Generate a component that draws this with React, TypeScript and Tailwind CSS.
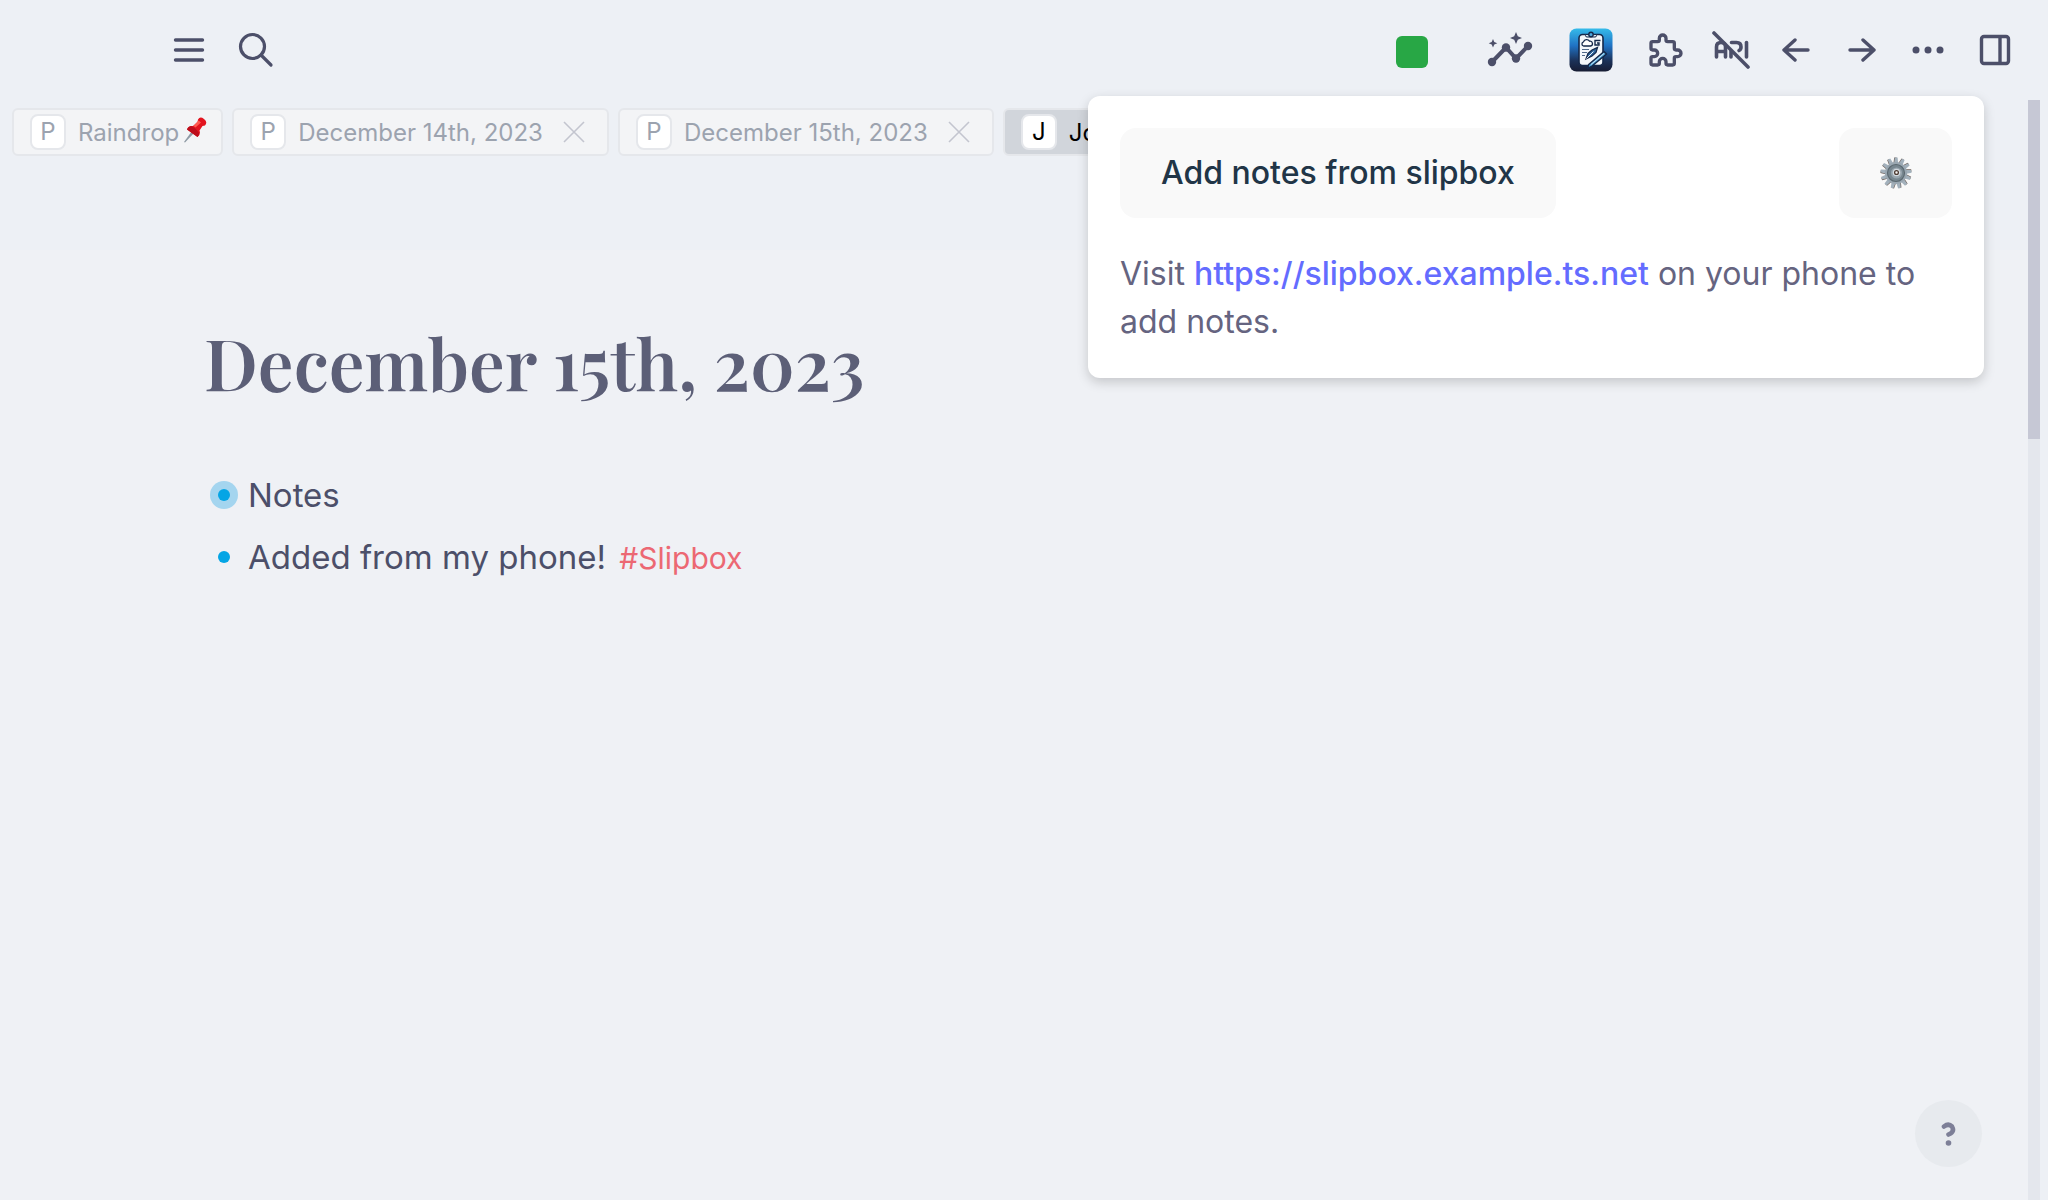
import React from "react";

const INK = "#4c4f69";

function IconButton({ label, className, children }: { label: string; className?: string; children: React.ReactNode }) {
  return (
    <button type="button" aria-label={label} className={`flex h-11 items-center justify-center ${className ?? ""}`}>
      {children}
    </button>
  );
}

function MenuIcon() {
  return (
    <svg width="32" height="26" viewBox="0 0 32 26" fill="none" stroke={INK} strokeWidth="3.4" strokeLinecap="round">
      <path d="M2.500 3h27M2.500 13h27M2.500 23h27" />
    </svg>
  );
}

function SearchIcon() {
  return (
    <svg width="36" height="36" viewBox="0 0 36 36" fill="none" stroke={INK} strokeWidth="3.2">
      <circle cx="14.500" cy="14.500" r="12" />
      <path d="M23 23l10 10" strokeLinecap="round" />
    </svg>
  );
}

function InsightsIcon() {
  return (
    <svg width="46" height="36" viewBox="0 0 46 36" fill={INK}>
      <path d="M5 30L19 15.500L29 26.500L41 14" fill="none" stroke={INK} strokeWidth="4" />
      <circle cx="5" cy="30" r="4.200" />
      <circle cx="19" cy="15.500" r="4.200" />
      <circle cx="29" cy="26.500" r="4.200" />
      <circle cx="41" cy="14" r="4.200" />
      <path d="M29 0l1.800 4.200 4.200 1.800-4.200 1.800-1.800 4.200-1.800-4.200-4.200-1.800 4.200-1.800z" />
      <path d="M6 7l1.300 3 3 1.300-3 1.300-1.300 3-1.300-3-3-1.300 3-1.300z" />
    </svg>
  );
}

function SlipboxLogo() {
  return (
    <svg width="44" height="44" viewBox="0 0 44 44">
      <defs>
        <linearGradient id="slipbox-bg" x1="0" y1="0" x2="0" y2="1">
          <stop offset="0" stopColor="#35bbea" />
          <stop offset="0.4" stopColor="#2072c4" />
          <stop offset="0.75" stopColor="#1b3158" />
          <stop offset="1" stopColor="#171c33" />
        </linearGradient>
      </defs>
      <rect x="0.500" y="0.500" width="43" height="43" rx="7" fill="url(#slipbox-bg)" />
      <rect x="10" y="6.500" width="24" height="31" rx="3.500" fill="#f3f7fb" stroke="#14284a" strokeWidth="1.600" />
      <path d="M16.500 6.500h11v1q0 1.500-1.500 1.500h-8q-1.500 0-1.500-1.500z" fill="#dce8f2" stroke="#14284a" strokeWidth="1" />
      <circle cx="22" cy="6.500" r="2.200" fill="#4ba9df" stroke="#14284a" strokeWidth="1.400" />
      <path d="M14.500 18a2.200 2.200 0 010-4.200 3.400 3.400 0 016-.6 2.400 2.400 0 011 4.800z" fill="#fff" stroke="#14284a" strokeWidth="1.300" />
      <path d="M31.500 12.500h-5.500v4.500h4v-2h-2" fill="none" stroke="#14284a" strokeWidth="1.400" />
      <path d="M13 21.500h7M13 24.500h5M13 27.500h3" stroke="#50698a" strokeWidth="1.200" />
      <path d="M17 31l2-5.500 4-3.500 5.500-2.500-1.500 5-4 3.500z" fill="#2c669d" stroke="#14284a" strokeWidth="1.300" />
      <path d="M17.500 30.500l7-7" stroke="#fff" strokeWidth="0.900" />
      <path d="M18.500 40.500l1.200-4L35 23.500l2.500 2.500-15 12.500z" fill="#4fa3d8" stroke="#14284a" strokeWidth="1.500" strokeLinejoin="round" />
      <path d="M22 36.500l13-11" stroke="#d5edf9" strokeWidth="0.900" />
    </svg>
  );
}

function PuzzleIcon() {
  return (
    <svg width="40" height="40" viewBox="0 0 24 24" fill="none" stroke={INK} strokeWidth="2" strokeLinecap="round" strokeLinejoin="round">
      <path d="M4 7h3a1 1 0 0 0 1 -1v-1a2 2 0 0 1 4 0v1a1 1 0 0 0 1 1h3a1 1 0 0 1 1 1v3a1 1 0 0 0 1 1h1a2 2 0 0 1 0 4h-1a1 1 0 0 0 -1 1v3a1 1 0 0 1 -1 1h-3a1 1 0 0 1 -1 -1v-1a2 2 0 0 0 -4 0v1a1 1 0 0 1 -1 1h-3a1 1 0 0 1 -1 -1v-3a1 1 0 0 1 1 -1h1a2 2 0 0 0 0 -4h-1a1 1 0 0 1 -1 -1v-3a1 1 0 0 1 1 -1" />
    </svg>
  );
}

function ApiOffIcon() {
  return (
    <svg width="40" height="40" viewBox="0 0 40 40" fill="none" stroke={INK} strokeWidth="3.600" strokeLinecap="round" strokeLinejoin="round">
      <path d="M4.500 27V17q0-4.500 4.500-4.500q4.500 0 4.500 4.500V27M4.500 21.500h9" />
      <path d="M19 21V27M19.500 12.500h5q4.500 0 4.500 4.500q0 2.500-2 3.500" />
      <path d="M34.500 12.500V27" />
      <path d="M2 3L36 37" />
    </svg>
  );
}

function ArrowIcon({ d }: { d: string }) {
  return (
    <svg width="28" height="26" viewBox="0 0 28 26" fill="none" stroke={INK} strokeWidth="3.400" strokeLinecap="round" strokeLinejoin="round">
      <path d={d} />
    </svg>
  );
}

function DotsIcon() {
  return (
    <svg width="32" height="8" viewBox="0 0 32 8" fill={INK}>
      <circle cx="4" cy="4" r="3.500" />
      <circle cx="16" cy="4" r="3.500" />
      <circle cx="28" cy="4" r="3.500" />
    </svg>
  );
}

function SidebarIcon() {
  return (
    <svg width="32" height="32" viewBox="0 0 32 32" fill="none" stroke={INK} strokeWidth="3.400">
      <rect x="2.500" y="2.500" width="27" height="27" rx="2.500" />
      <path d="M21 3v26" />
    </svg>
  );
}

function PinIcon() {
  return (
    <svg width="24" height="26" viewBox="0 0 24 26" className="shrink-0">
      <path d="M9 14L1 25l1 .5L11 16z" fill="#8e9aa5" />
      <path d="M15 2.500q2-3.500 6-.5 4 3 1 6.500l-2.500.500-3 4.500q1.500 4-2 6.500L4 12.500q1.500-4 6-3.500l4.500-4z" fill="#e3141f" />
      <path d="M4 12.500q1-3.500 4.500-3.500 5 2.500 7.500 7 .5 2-1.500 4z" fill="#bd0d1b" />
      <path d="M15.500 3.500l-5 5.500 2 1.500 5.500-5z" fill="#ff5a50" />
    </svg>
  );
}

function GearIcon() {
  const teeth = Array.from({ length: 13 }, (_, i) => (i * 360) / 13);
  return (
    <svg width="32" height="32" viewBox="0 0 32 32">
      {teeth.map((a) => (
        <g key={a} transform={`rotate(${a} 16 16)`}>
          <path d="M13.400 7l.8-6.500h2.400l.4 6.500z" fill="#6d5f58" />
          <path d="M14 7l.8-6.500h2.800l.6 6.500z" fill="#a3b1bc" />
        </g>
      ))}
      <circle cx="16" cy="16" r="11" fill="#9aa7b1" />
      <circle cx="16" cy="16" r="8.500" fill="#77868f" stroke="#5c6971" strokeWidth="1.200" />
      <circle cx="16.500" cy="16" r="5.600" fill="#98a5ae" />
      <circle cx="16.500" cy="15.500" r="3.800" fill="#d3dae0" />
      <circle cx="16.500" cy="15.500" r="1.900" fill="#f7f5f3" stroke="#4d3b32" strokeWidth="1.300" />
    </svg>
  );
}

function QuestionIcon() {
  return (
    <svg width="16" height="24" viewBox="0 0 16 24" fill="none" stroke="#7d7f97" strokeLinecap="round" strokeLinejoin="round">
      <path d="M3 4.500Q7.500 1 11 4.500Q13.500 9 9.500 11.500L7.500 12.500" strokeWidth="4.600" />
      <circle cx="7.500" cy="21" r="2.800" fill="#7d7f97" stroke="none" />
    </svg>
  );
}

function Tab({ badge, title, active, pinned }: { badge: string; title: string; active?: boolean; pinned?: boolean }) {
  return (
    <div
      className={`flex h-12 shrink-0 items-center rounded-md border-2 border-[#e5e7eb] pl-4 text-2xl ${
        active ? "bg-[#d1d5db] text-black" : "bg-[#f3f4f6] text-[#9ca3af]"
      } ${pinned ? "pr-3.5" : "pr-[22px]"}`}
    >
      <span className="flex h-9 w-9 items-center justify-center rounded-lg border-2 border-[#e5e7eb] bg-white">{badge}</span>
      <button type="button" className="ml-3 pt-0.5 whitespace-nowrap">{title}</button>
      {pinned ? (
        <span className="mb-1 ml-1"><PinIcon /></span>
      ) : (
        <button type="button" aria-label={`Close ${title}`} className="ml-5">
          <svg width="22" height="22" viewBox="0 0 22 22" fill="none" stroke="#c3c5cf" strokeWidth="1.600">
            <path d="M1 1l20 20M21 1L1 21" />
          </svg>
        </button>
      )}
    </div>
  );
}

function Block({ focused, children }: { focused?: boolean; children: React.ReactNode }) {
  return (
    <li className="flex h-[62px] items-center gap-2.5">
      <span className={`flex h-7 w-7 items-center justify-center rounded-full ${focused ? "bg-[#a4d5ef]" : ""}`}>
        <span className="h-3 w-3 rounded-full bg-[#04a5e5]" />
      </span>
      <p className="text-[33px] leading-10">{children}</p>
    </li>
  );
}

function SlipboxPanel() {
  return (
    <section className="absolute top-24 right-16 w-[896px] rounded-xl bg-white p-8 shadow-[0_4px_12px_rgba(0,0,0,0.18)]">
      <div className="flex items-center justify-between">
        <button type="button" className="h-[90px] rounded-2xl bg-[#f9f9f9] px-[41px] text-[32px] font-medium text-[#213547]">
          Add notes from slipbox
        </button>
        <button type="button" aria-label="Settings" className="flex h-[90px] w-[113px] items-center justify-center rounded-2xl bg-[#f9f9f9]">
          <GearIcon />
        </button>
      </div>
      <p className="mt-8 text-[32px] leading-12 text-[#656480]">
        Visit{" "}
        <a href="https://slipbox.example.ts.net" className="font-medium text-[#646cff]">
          https://slipbox.example.ts.net
        </a>{" "}
        on your phone to add notes.
      </p>
    </section>
  );
}

export default function App() {
  return (
    <div className="relative flex min-h-screen flex-col overflow-hidden bg-[#edf0f5] font-['Inter',sans-serif] text-[#4c4f69]">
      <header className="flex h-[100px] items-center justify-between pr-[37px] pl-[173px]">
        <nav className="flex items-center gap-[33px]">
          <IconButton label="Menu"><MenuIcon /></IconButton>
          <IconButton label="Search"><SearchIcon /></IconButton>
        </nav>
        <nav className="flex items-center">
          <IconButton label="Status" className="mr-[59px] pt-1">
            <span className="h-8 w-8 rounded-md bg-[#28a745]" />
          </IconButton>
          <IconButton label="Insights" className="mr-9"><InsightsIcon /></IconButton>
          <IconButton label="Slipbox" className="mr-[33px]"><SlipboxLogo /></IconButton>
          <IconButton label="Plugins" className="mr-[26px]"><PuzzleIcon /></IconButton>
          <IconButton label="API server off" className="mr-[30px]"><ApiOffIcon /></IconButton>
          <IconButton label="Back" className="mr-[38px]"><ArrowIcon d="M26 13H2M13 3L2 13L13 23" /></IconButton>
          <IconButton label="Forward" className="mr-9"><ArrowIcon d="M2 13H26M15 3L26 13L15 23" /></IconButton>
          <IconButton label="More" className="mr-[35px]"><DotsIcon /></IconButton>
          <IconButton label="Toggle right sidebar"><SidebarIcon /></IconButton>
        </nav>
      </header>

      <div className="flex flex-1">
        <div className="flex min-w-0 flex-1 flex-col">
          <div className="flex h-[150px] items-start gap-[9px] overflow-hidden px-3 pt-2">
            <Tab badge="P" title="Raindrop" pinned />
            <Tab badge="P" title="December 14th, 2023" />
            <Tab badge="P" title="December 15th, 2023" />
            <Tab badge="J" title="Journals" active />
          </div>
          <main className="flex-1 bg-[#eff1f5] pt-[60px] pl-[204px]">
            <h1 className="font-['Playfair_Display','Liberation_Serif',serif] text-[71px] leading-[104px] font-semibold text-[#5c5f77]">
              December 15th, 2023
            </h1>
            <ul className="mt-[50px] pl-1.5">
              <Block focused>Notes</Block>
              <Block>
                Added from my phone! <a href="#slipbox" className="ml-1 text-[30px] text-[#ec6873]">#Slipbox</a>
              </Block>
            </ul>
          </main>
        </div>
        <div className="mr-2 w-3 bg-[#e4e7ed]">
          <div className="h-[339px] bg-[#c6c8d5]" />
        </div>
      </div>

      <SlipboxPanel />

      <button type="button" aria-label="Help" className="absolute right-[66px] bottom-[33px] flex h-[67px] w-[67px] items-center justify-center rounded-full bg-[#e7eaee]">
        <QuestionIcon />
      </button>
    </div>
  );
}
